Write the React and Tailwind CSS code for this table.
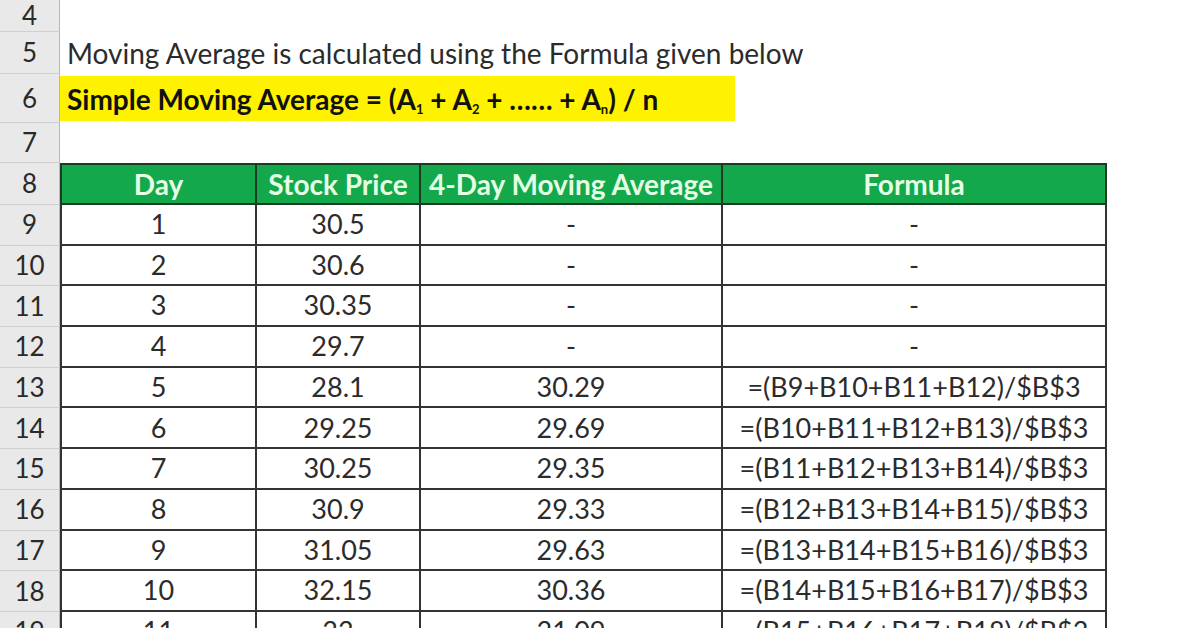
import React from "react";

const rows = [
  { n: 9, day: "1", price: "30.5", avg: "-", formula: "-" },
  { n: 10, day: "2", price: "30.6", avg: "-", formula: "-" },
  { n: 11, day: "3", price: "30.35", avg: "-", formula: "-" },
  { n: 12, day: "4", price: "29.7", avg: "-", formula: "-" },
  { n: 13, day: "5", price: "28.1", avg: "30.29", formula: "=(B9+B10+B11+B12)/$B$3" },
  { n: 14, day: "6", price: "29.25", avg: "29.69", formula: "=(B10+B11+B12+B13)/$B$3" },
  { n: 15, day: "7", price: "30.25", avg: "29.35", formula: "=(B11+B12+B13+B14)/$B$3" },
  { n: 16, day: "8", price: "30.9", avg: "29.33", formula: "=(B12+B13+B14+B15)/$B$3" },
  { n: 17, day: "9", price: "31.05", avg: "29.63", formula: "=(B13+B14+B15+B16)/$B$3" },
  { n: 18, day: "10", price: "32.15", avg: "30.36", formula: "=(B14+B15+B16+B17)/$B$3" },
  { n: 19, day: "11", price: "33", avg: "31.09", formula: "=(B15+B16+B17+B18)/$B$3" },
];

// Row number cell on the left
const RowNum = ({ n }) => (
  <div className="w-[60px] shrink-0 flex items-center justify-center bg-[#e9e9e9] border-r border-r-[#b8b8b8] border-b border-b-[#cfcfcf] text-[26px] text-[#2a2a2a]">
    {n}
  </div>
);

export default function App() {
  return (
    <div
      className="w-[1196px] h-[628px] overflow-hidden bg-white flex flex-col text-[#2b2b2b]"
      style={{ fontFamily: "Lato, 'Open Sans', sans-serif" }}
    >
      {/* Row 4 */}
      <div className="flex h-[32px] shrink-0">
        <RowNum n={4} />
        <div className="flex-1" />
      </div>

      {/* Row 5 */}
      <div className="flex h-[42px] shrink-0">
        <RowNum n={5} />
        <div className="flex-1 flex items-center pl-[7px] text-[28px]">
          Moving Average is calculated using the Formula given below
        </div>
      </div>

      {/* Row 6 */}
      <div className="flex h-[49px] shrink-0">
        <RowNum n={6} />
        <div className="flex-1 flex items-center py-[2px]">
          <div className="w-[675px] h-full bg-[#fff200] flex items-center pl-[7px] text-[28px] font-bold text-[#111]">
            <span>
              Simple Moving Average = (A<sub className="text-[13px] relative top-[4px]">1</sub> + A<sub className="text-[13px] relative top-[4px]">2</sub> + …… + A<sub className="text-[13px] relative top-[4px]">n</sub>) / n
            </span>
          </div>
        </div>
      </div>

      {/* Row 7 */}
      <div className="flex h-[40px] shrink-0">
        <RowNum n={7} />
        <div className="flex-1" />
      </div>

      {/* Row 8 - table header */}
      <div className="flex h-[42px] shrink-0">
        <RowNum n={8} />
        <div className="flex border-2 border-[#1d3a24] bg-[#13a84c] text-[#e4ffe4] font-bold text-[28px]">
          <div className="w-[195px] flex items-center justify-center border-r-2 border-[#1d3a24]">Day</div>
          <div className="w-[164px] flex items-center justify-center border-r-2 border-[#1d3a24] whitespace-nowrap">Stock Price</div>
          <div className="w-[302px] flex items-center justify-center border-r-2 border-[#1d3a24] whitespace-nowrap">4-Day Moving Average</div>
          <div className="w-[382px] flex items-center justify-center">Formula</div>
        </div>
      </div>

      {/* Data rows */}
      {rows.map((r) => (
        <div key={r.n} className="flex h-[40.7px] shrink-0">
          <RowNum n={r.n} />
          <div className="flex border-x-2 border-b-2 border-[#333] text-[27px]">
            <div className="w-[195px] flex items-center justify-center border-r-2 border-[#333]">{r.day}</div>
            <div className="w-[164px] flex items-center justify-center border-r-2 border-[#333]">{r.price}</div>
            <div className="w-[302px] flex items-center justify-center border-r-2 border-[#333]">{r.avg}</div>
            <div className="w-[382px] flex items-center justify-center">{r.formula}</div>
          </div>
        </div>
      ))}
    </div>
  );
}
